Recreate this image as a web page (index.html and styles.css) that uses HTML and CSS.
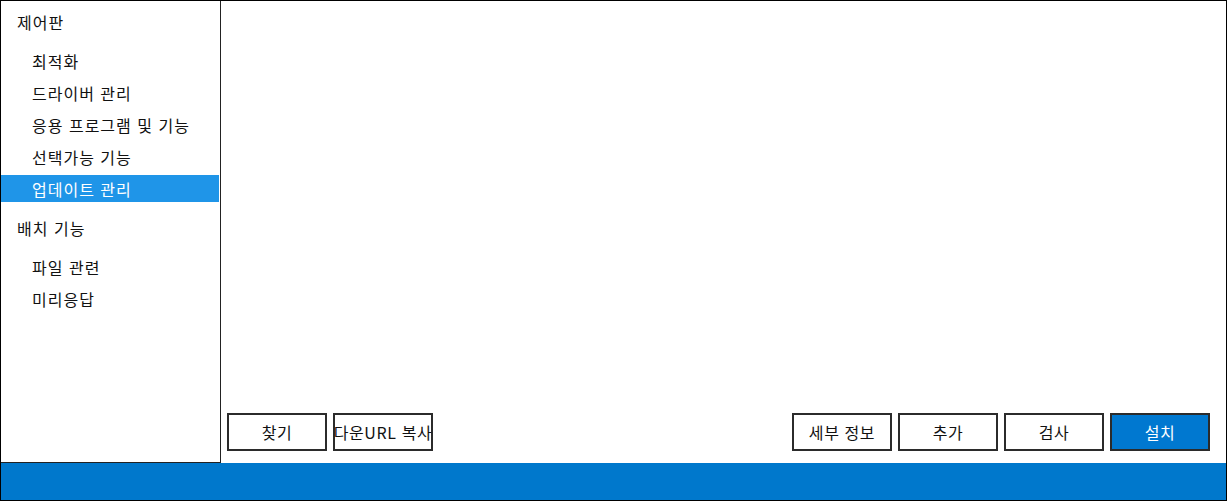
FILE: index.html
```html
<!DOCTYPE html>
<html lang="ko">
<head>
<meta charset="utf-8">
<title>제어판</title>
<link rel="stylesheet" href="styles.css">
</head>
<body>
<div class="window">
  <div class="top">
    <nav class="sidebar">
      <div class="group">
        <div class="header">제어판</div>
        <div class="item">최적화</div>
        <div class="item">드라이버 관리</div>
        <div class="item">응용 프로그램 및 기능</div>
        <div class="item">선택가능 기능</div>
        <div class="item selected">업데이트 관리</div>
      </div>
      <div class="group">
        <div class="header">배치 기능</div>
        <div class="item">파일 관련</div>
        <div class="item">미리응답</div>
      </div>
    </nav>
    <main class="main">
      <div class="content"></div>
      <div class="actions">
        <div class="btn-row">
          <button class="btn">찾기</button>
          <button class="btn">다운URL 복사</button>
        </div>
        <div class="btn-row">
          <button class="btn">세부 정보</button>
          <button class="btn">추가</button>
          <button class="btn">검사</button>
          <button class="btn primary">설치</button>
        </div>
      </div>
    </main>
  </div>
  <div class="footer"></div>
</div>
</body>
</html>
```

FILE: styles.css
```css
* { box-sizing: border-box; }
html, body {
  margin: 0;
  padding: 0;
  background: #fff;
}
body {
  font-family: "Noto Sans CJK KR", "Noto Sans", sans-serif;
  font-size: 16px;
  letter-spacing: 1px;
  color: #111;
}
.window {
  width: 1227px;
  height: 501px;
  border: 1px solid #000;
  display: flex;
  flex-direction: column;
}
.top {
  display: flex;
  height: 462px;
}
.sidebar {
  width: 220px;
  flex: none;
  border-right: 1px solid #222;
  border-bottom: 1px solid #222;
  padding-top: 7px;
  display: flex;
  flex-direction: column;
  gap: 12px;
}
.group {
  display: flex;
  flex-direction: column;
  gap: 5px;
}
.header {
  height: 27px;
  line-height: 28px;
  padding-left: 16px;
  margin-bottom: 7px;
}
.item {
  height: 27px;
  line-height: 28px;
  padding-left: 31px;
  margin-right: 1px;
  white-space: nowrap;
}
.item.selected {
  background: #1f95e8;
  color: #fff;
}
.main {
  flex: 1;
  display: flex;
  flex-direction: column;
  padding: 0 16px 12px 6px;
}
.content { flex: 1; }
.actions {
  display: flex;
  justify-content: space-between;
}
.btn-row {
  display: flex;
  gap: 6px;
}
.btn {
  width: 100px;
  height: 38px;
  border: 2px solid #2b2b2b;
  background: #fff;
  font-family: inherit;
  font-size: 16px;
  letter-spacing: 0.6px;
  color: #111;
  padding: 0;
  white-space: nowrap;
  overflow: visible;
  display: flex;
  align-items: center;
  justify-content: center;
  cursor: pointer;
}
.btn.primary {
  background: #0078d0;
  color: #fff;
}
.footer {
  flex: 1;
  background: #0078cc;
}
```
